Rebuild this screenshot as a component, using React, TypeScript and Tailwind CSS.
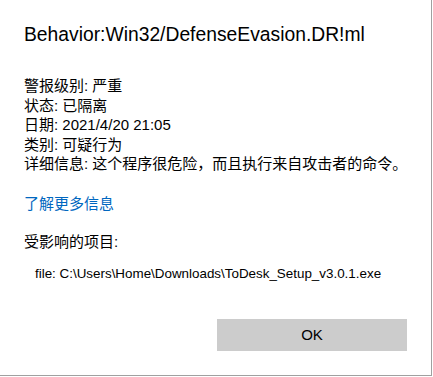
export default function App() {
  return (
    <div className="w-[433px] h-[377px] bg-white">
      <div
        className="w-[432px] h-[376px] border-r border-b border-[#a0a0a0] flex flex-col text-black"
        style={{ fontFamily: '"Liberation Sans", "Noto Sans CJK SC", sans-serif' }}
      >
        {/* header */}
        <h1 className="pl-6 pt-[21px] text-[19.3px] leading-[28px] font-normal">
          Behavior:Win32/DefenseEvasion.DR!ml
        </h1>

        {/* details */}
        <div className="pl-6 mt-[27px] text-[15px] leading-[19.6px]">
          <p>警报级别: 严重</p>
          <p>状态: 已隔离</p>
          <p>日期: 2021/4/20 21:05</p>
          <p>类别: 可疑行为</p>
          <p>详细信息: 这个程序很危险，而且执行来自攻击者的命令。</p>
        </div>

        <a href="#" className="pl-6 mt-[20px] text-[15px] leading-[19.6px] text-[#0067c0]">
          了解更多信息
        </a>

        <p className="pl-6 mt-[18px] text-[15px] leading-[19.6px]">受影响的项目:</p>
        <p className="pl-[35px] mt-[14px] text-[13.4px] leading-[18px]">
          file: C:\Users\Home\Downloads\ToDesk_Setup_v3.0.1.exe
        </p>

        {/* footer */}
        <div className="flex justify-end pr-6 mt-[36px]">
          <button className="w-[190px] h-[32px] bg-[#cccccc] text-[15px]">OK</button>
        </div>
      </div>
    </div>
  );
}
